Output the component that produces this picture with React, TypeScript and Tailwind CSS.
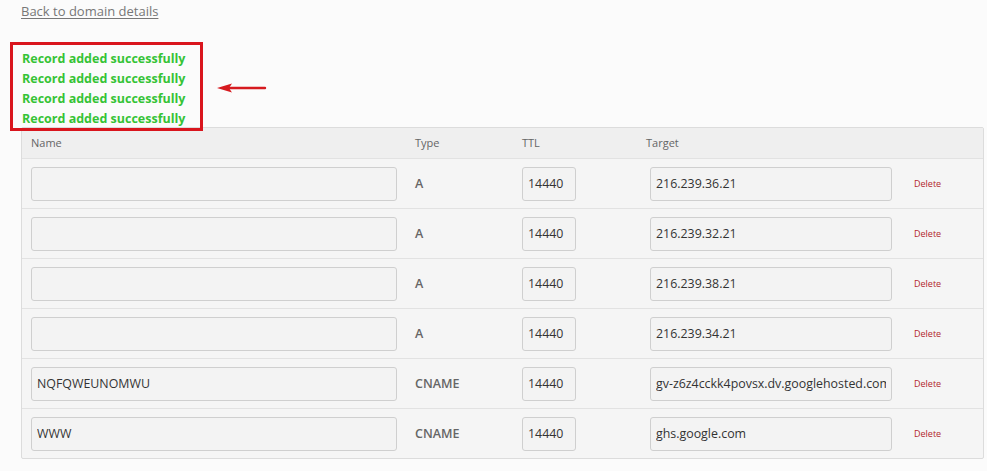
const records = [
  { name: "", type: "A", ttl: "14440", target: "216.239.36.21" },
  { name: "", type: "A", ttl: "14440", target: "216.239.32.21" },
  { name: "", type: "A", ttl: "14440", target: "216.239.38.21" },
  { name: "", type: "A", ttl: "14440", target: "216.239.34.21" },
  { name: "NQFQWEUNOMWU", type: "CNAME", ttl: "14440", target: "gv-z6z4cckk4povsx.dv.googlehosted.com" },
  { name: "WWW", type: "CNAME", ttl: "14440", target: "ghs.google.com" },
];

const inputCls =
  "h-[34px] rounded-[3px] border border-[#cfcfcf] bg-[#f3f3f3] px-[5px] text-[12.4px] text-[#333] outline-none";

export default function App() {
  return (
    <div className="min-h-screen bg-[#fbfbfb] font-['Open_Sans',sans-serif]">
      <div className="pl-[21px] pr-[3px]">
        {/* Back link */}
        <div className="pt-[1px] leading-[18px]">
          <a href="#" className="text-[13px] text-[#777] underline underline-offset-2">
            Back to domain details
          </a>
        </div>

        {/* Success messages */}
        <div className="relative mt-[29px] pl-[1px]">
          {[1, 2, 3, 4].map((i) => (
            <div key={i} className="text-[12.5px] font-bold leading-[20px] text-[#35c335]">
              Record added successfully
            </div>
          ))}
          {/* annotation box + arrow */}
          <div className="pointer-events-none absolute left-[-11px] top-[-7px] z-10 h-[89px] w-[193px] border-[3px] border-[#d9151d]" />
          <svg
            className="absolute left-[195px] top-[33px] z-10"
            width="52"
            height="12"
            viewBox="0 0 52 12"
          >
            <line x1="14" y1="6" x2="49" y2="6" stroke="#d61a1f" strokeWidth="2.4" strokeLinecap="round" />
            <polygon points="1,6 16,1.5 13,6 16,10.5" fill="#d61a1f" />
          </svg>
        </div>

        {/* Records table */}
        <div className="mt-[-2px] overflow-hidden rounded-[2px] border border-[#dcdcdc] bg-[#f5f5f5]">
          <div className="grid h-[30px] grid-cols-[393px_107px_124px_268px_1fr] items-center bg-[#efefef] text-[11px] text-[#666]">
            <div className="pl-[9px]">Name</div>
            <div>Type</div>
            <div>TTL</div>
            <div>Target</div>
            <div />
          </div>
          {records.map((r, i) => (
            <div
              key={i}
              className="grid h-[50px] grid-cols-[393px_107px_124px_268px_1fr] items-center border-t border-[#e2e2e2] leading-none"
            >
              <div className="pl-[9px]">
                <input readOnly value={r.name} className={`${inputCls} w-[366px]`} />
              </div>
              <div className="pt-[1px] text-[12.5px] font-semibold text-[#666]">{r.type}</div>
              <div>
                <input readOnly value={r.ttl} className={`${inputCls} w-[54px]`} />
              </div>
              <div className="pl-[4px]">
                <input readOnly value={r.target} className={`${inputCls} w-[242px]`} />
              </div>
              <div className="flex items-center">
                <a href="#" className="text-[9px] leading-none text-[#b3262b]">
                  Delete
                </a>
              </div>
            </div>
          ))}
        </div>
      </div>
    </div>
  );
}
